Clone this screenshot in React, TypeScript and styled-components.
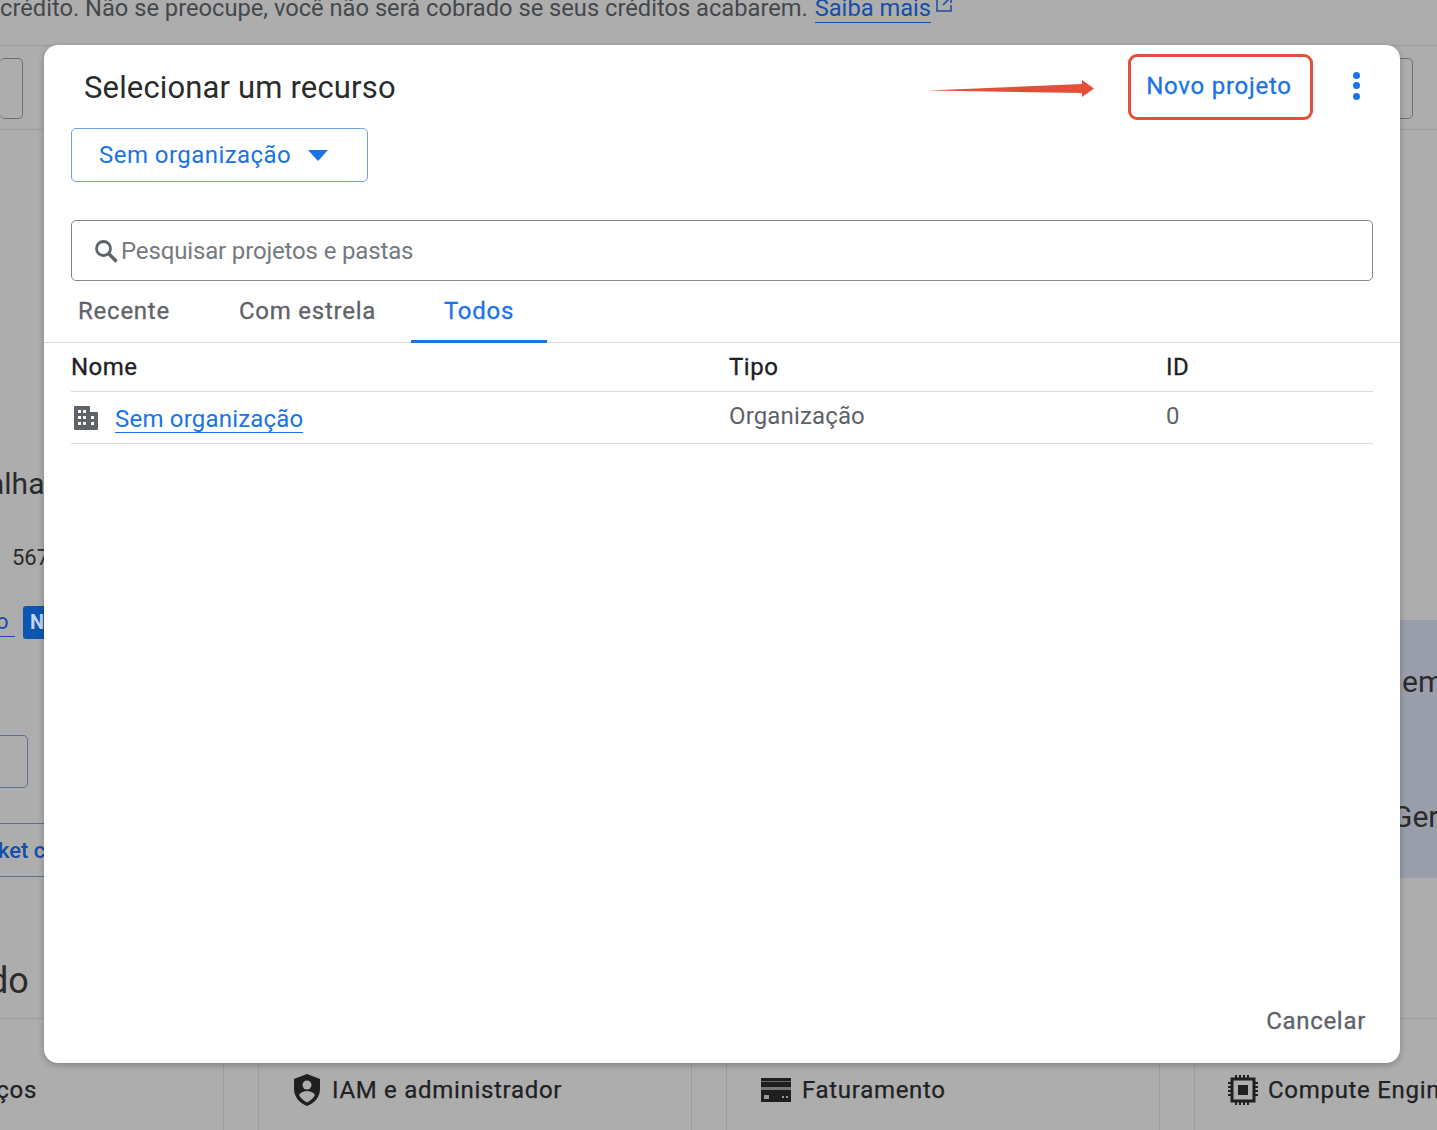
import styled, { createGlobalStyle } from "styled-components";

const GlobalStyle = createGlobalStyle`
  html, body {
    margin: 0;
    padding: 0;
    background: #adadad;
    font-family: Roboto, "Liberation Sans", sans-serif;
  }
  * {
    box-sizing: border-box;
  }
`;

const Page = styled.div`
  position: relative;
  width: 1437px;
  height: 1130px;
  overflow: hidden;
  background: #adadad;
  color: #1f1f1f;
`;

// ---- page behind the dialog ----

const Notice = styled.div`
  height: 54px;
  margin-top: -8px;
  font-size: 23.7px;
  line-height: 32px;
  white-space: nowrap;
  color: #45484b;
  border-bottom: 1px solid #9c9c9c;

  a {
    color: #174ea6;
    border-bottom: 1px solid #174ea6;
    margin-left: 1px;
  }

  svg {
    margin-left: 4px;
    vertical-align: 3px;
  }
`;

const Toolbar = styled.div`
  display: flex;
  justify-content: space-between;
  height: 84px;
  padding: 12px 24px 0 0;
  border-bottom: 1px solid #9c9c9c;
`;

const GhostButton = styled.div<{ $side: "left" | "right" }>`
  width: ${(p) => (p.$side === "left" ? "23px" : "30px")};
  height: 61px;
  border: 1px solid #6f6f6f;
  border-radius: 5px;
  ${(p) => (p.$side === "left" ? "border-left: 0;" : "")}
`;

const Middle = styled.div`
  display: flex;
  justify-content: space-between;
  height: 888px;
`;

const LeftFragments = styled.div`
  display: flex;
  flex-direction: column;
  width: 44px;
  overflow: hidden;
  padding-top: 334px;
  white-space: nowrap;
`;

const CutHeading = styled.div`
  margin-left: -12px;
  font-size: 30px;
  line-height: 40px;
  color: #2b2b2b;
`;

const CutNumber = styled.div`
  margin: 41px 0 0 12px;
  font-size: 22px;
  line-height: 26px;
  color: #2b2b2b;
`;

const CutLinkRow = styled.div`
  display: flex;
  align-items: center;
  gap: 8px;
  height: 34px;
  margin-top: 34px;
`;

const CutLink = styled.span`
  flex: none;
  width: 15px;
  border-bottom: 1px solid #174ea6;
  font-size: 22px;
  line-height: 28px;
  color: #174ea6;
  overflow: hidden;
  text-indent: -4px;
`;

const Badge = styled.span`
  flex: none;
  width: 21px;
  height: 33px;
  padding-left: 7px;
  border-radius: 3px 0 0 3px;
  background: #0b57b0;
  color: #c6d4ea;
  font-size: 20px;
  font-weight: 700;
  line-height: 33px;
`;

const CutBox = styled.div`
  width: 28px;
  height: 53px;
  margin-top: 96px;
  border: 1px solid #5c7099;
  border-left: 0;
  border-radius: 0 5px 5px 0;
`;

const CutBanner = styled.div`
  height: 54px;
  margin-top: 35px;
  border-top: 1px solid #5c7099;
  border-bottom: 1px solid #5c7099;
  font-size: 22px;
  font-weight: 500;
  line-height: 54px;
  color: #174ea6;
  text-indent: -2px;
`;

const CutTitle = styled.div`
  margin: 82px 0 0 0;
  font-size: 36px;
  line-height: 44px;
  color: #2b2b2b;
  text-indent: -12px;
`;

const RightPanel = styled.div`
  display: flex;
  flex-direction: column;
  align-self: flex-start;
  width: 37px;
  height: 258px;
  margin-top: 490px;
  padding: 42px 0 0 2px;
  overflow: hidden;
  background: #9a9eaa;
  white-space: nowrap;
  font-size: 30px;
  line-height: 40px;
  color: #2b2b2b;

  span + span {
    margin: 95px 0 0 -10px;
  }
`;

const ShortcutRow = styled.div`
  display: flex;
  gap: 34px;
  height: 112px;
  margin-left: -210px;
  border-top: 1px solid #9c9c9c;
`;

const Shortcut = styled.div`
  display: flex;
  flex: 0 0 434px;
  align-items: center;
  gap: 10px;
  height: 100%;
  padding: 30px 0 0 33px;
  border-left: 1px solid #9c9c9c;
  border-right: 1px solid #9c9c9c;
  font-size: 24px;
  letter-spacing: 0.7px;
  -webkit-text-stroke: 0.25px currentColor;
  white-space: nowrap;
  color: #202124;
`;

const ShortcutText = styled.span<{ $end?: boolean }>`
  ${(p) => (p.$end ? "margin-left: auto; margin-right: 186px;" : "")}
`;

// ---- dialog ----

const Dialog = styled.section`
  position: absolute;
  top: 45px;
  left: 44px;
  display: flex;
  flex-direction: column;
  width: 1356px;
  height: 1018px;
  border-radius: 14px;
  background: #fff;
  box-shadow: 0 2px 6px rgba(0, 0, 0, 0.25);
`;

const Header = styled.header`
  display: flex;
  align-items: flex-start;
  justify-content: space-between;
  height: 83px;
  padding: 9px 0 0 40px;
`;

const Title = styled.h2`
  margin: 16px 0 0;
  font-size: 31px;
  font-weight: 400;
  letter-spacing: 0.15px;
  line-height: 36px;
  color: #2a2b2d;
`;

const HeaderActions = styled.div`
  display: flex;
  align-items: center;
  gap: 40px;
  padding-right: 40px;
`;

const NewProject = styled.button`
  width: 185px;
  height: 66px;
  padding: 0 3px 2px 0;
  border: 3px solid #e34f38;
  border-radius: 9px;
  background: #fff;
  color: #1a73e8;
  font: 400 24px Roboto, sans-serif;
  letter-spacing: 0.75px;
  -webkit-text-stroke: 0.3px currentColor;
`;

const Dots = styled.span`
  display: flex;
  flex-direction: column;
  gap: 3.5px;
  margin-bottom: 3px;

  i {
    width: 7px;
    height: 7px;
    border-radius: 50%;
    background: #1a73e8;
  }
`;

const Arrow = styled.svg`
  position: absolute;
  top: 34px;
  left: 882px;
`;

const OrgSelect = styled.button`
  display: flex;
  align-items: center;
  gap: 17px;
  width: 297px;
  height: 54px;
  margin-left: 27px;
  padding: 0 0 0 27px;
  border: 1px solid #6ea0e8;
  border-radius: 5px;
  background: #fff;
  color: #1a73e8;
  font: 400 24px Roboto, sans-serif;
  letter-spacing: 0.45px;
`;

const Caret = styled.span`
  width: 0;
  height: 0;
  border-left: 10px solid transparent;
  border-right: 10px solid transparent;
  border-top: 11px solid #1a73e8;
`;

const SearchBox = styled.div`
  display: flex;
  align-items: center;
  gap: 3px;
  height: 61px;
  margin: 38px 27px 0;
  padding-left: 22px;
  border: 1px solid #80868b;
  border-radius: 5px;
  font-size: 24px;
`;

const Placeholder = styled.span`
  color: #757a7f;
  letter-spacing: -0.15px;
`;

const Tabs = styled.nav`
  display: flex;
  height: 62px;
  border-bottom: 1px solid #dadce0;
`;

const Tab = styled.div<{ $active?: boolean; $width: number }>`
  display: flex;
  align-items: center;
  justify-content: center;
  width: ${(p) => p.$width}px;
  height: 62px;
  font-size: 24px;
  letter-spacing: 0.75px;
  -webkit-text-stroke: 0.3px currentColor;
  color: ${(p) => (p.$active ? "#1a73e8" : "#5f6368")};
  border-bottom: 3px solid ${(p) => (p.$active ? "#1a73e8" : "transparent")};
`;

const Table = styled.div`
  margin: 0 27px;
`;

const Row = styled.div<{ $height: number }>`
  display: grid;
  grid-template-columns: 658px 437px 1fr;
  align-items: center;
  height: ${(p) => p.$height}px;
  border-bottom: 1px solid #dadce0;
  font-size: 24px;
`;

const HeadCell = styled.div`
  margin-top: -1px;
  letter-spacing: 0.5px;
  -webkit-text-stroke: 0.3px currentColor;
  color: #202124;
`;

const NameCell = styled.div`
  display: flex;
  align-items: center;
  gap: 17px;
  padding-left: 3px;
`;

const RowLink = styled.a`
  margin-top: 3px;
  color: #1a73e8;
  border-bottom: 1px solid #1a73e8;
  letter-spacing: 0.2px;
  line-height: 26px;
`;

const Cell = styled.div`
  color: #5f6368;
  margin-top: -3px;
  letter-spacing: 0.15px;
`;

const Footer = styled.footer`
  display: flex;
  justify-content: flex-end;
  margin-top: auto;
  padding: 0 34px 28px 0;
`;

const Cancel = styled.button`
  padding: 0;
  border: 0;
  background: none;
  color: #5f6368;
  font: 400 24px Roboto, sans-serif;
  letter-spacing: 0.7px;
  -webkit-text-stroke: 0.3px currentColor;
`;

const App = () => {
  return (
    <Page>
      <GlobalStyle />
      <Notice>
        crédito. Não se preocupe, você não será cobrado se seus créditos acabarem.{" "}
        <a>Saiba mais</a>
        <svg width="18" height="18" viewBox="0 0 18 18" fill="none" stroke="#174ea6" strokeWidth="1.5">
          <path d="M8 2H2v14h14v-6M10 2h6v6M16 2L8 10" />
        </svg>
      </Notice>
      <Toolbar>
        <GhostButton $side="left" />
        <GhostButton $side="right" />
      </Toolbar>
      <Middle>
        <LeftFragments>
          <CutHeading>alha</CutHeading>
          <CutNumber>567</CutNumber>
          <CutLinkRow>
            <CutLink>o</CutLink>
            <Badge>N</Badge>
          </CutLinkRow>
          <CutBox />
          <CutBanner>ket c</CutBanner>
          <CutTitle>do</CutTitle>
        </LeftFragments>
        <RightPanel>
          <span>em</span>
          <span>Ger</span>
        </RightPanel>
      </Middle>
      <ShortcutRow>
        <Shortcut>
          <ShortcutText $end>ços</ShortcutText>
        </Shortcut>
        <Shortcut>
          <svg width="30" height="34" viewBox="0 0 30 34">
            <path d="M15 1l13 5v10c0 8-5.500 14-13 17C7.500 30 2 24 2 16V6z" fill="#1f1f1f" />
            <circle cx="15" cy="12" r="4.500" fill="#adadad" />
            <path d="M7 22c2-3 5-4 8-4s6 1 8 4c-1.500 3-4.500 6-8 7.500C11.500 28 8.500 25 7 22z" fill="#adadad" />
          </svg>
          <span>IAM e administrador</span>
        </Shortcut>
        <Shortcut>
          <svg width="32" height="26" viewBox="0 0 32 26">
            <path d="M1 1h30v24H1z" fill="#1f1f1f" />
            <path d="M1 4h30v1H1z" fill="#6a6a6a" />
            <path d="M1 10h30v3H1z" fill="#777" />
            <path d="M4 18h5v4H4zM22 19h2v2h-2zM26 19h2v2h-2z" fill="#9a9a9a" />
          </svg>
          <span>Faturamento</span>
        </Shortcut>
        <Shortcut>
          <svg width="30" height="32" viewBox="0 0 30 32" fill="none">
            <rect x="4" y="5" width="22" height="22" stroke="#1f1f1f" strokeWidth="3" />
            <rect x="10" y="11" width="10" height="10" fill="#1f1f1f" />
            <path d="M0 9h4M0 13h4M0 17h4M0 21h4M26 9h4M26 13h4M26 17h4M26 21h4M8 1v4M12 1v4M16 1v4M20 1v4M8 27v4M12 27v4M16 27v4M20 27v4" stroke="#1f1f1f" strokeWidth="2" />
          </svg>
          <span>Compute Engine</span>
        </Shortcut>
      </ShortcutRow>

      <Dialog>
        <Header>
          <Title>Selecionar um recurso</Title>
          <HeaderActions>
            <NewProject>Novo projeto</NewProject>
            <Dots>
              <i />
              <i />
              <i />
            </Dots>
          </HeaderActions>
        </Header>
        <Arrow width="170" height="20" viewBox="0 0 170 20">
          <path d="M2 11.500L156 5V1l12 8.500L156 18v-4z" fill="#e34f38" />
        </Arrow>
        <OrgSelect>
          Sem organização
          <Caret />
        </OrgSelect>
        <SearchBox>
          <svg width="24" height="24" viewBox="0 0 24 24" fill="none" stroke="#5f6368">
            <circle cx="9.500" cy="9.500" r="7" strokeWidth="2.800" />
            <path d="M14.500 14.500L22.500 22.500" strokeWidth="3.400" />
          </svg>
          <Placeholder>Pesquisar projetos e pastas</Placeholder>
        </SearchBox>
        <Tabs>
          <Tab $width={160}>Recente</Tab>
          <Tab $width={207}>Com estrela</Tab>
          <Tab $width={136} $active>
            Todos
          </Tab>
        </Tabs>
        <Table>
          <Row $height={49}>
            <HeadCell>Nome</HeadCell>
            <HeadCell>Tipo</HeadCell>
            <HeadCell>ID</HeadCell>
          </Row>
          <Row $height={52}>
            <NameCell>
              <svg width="24" height="24" viewBox="0 0 24 24">
                <path
                  fillRule="evenodd"
                  fill="#5f6368"
                  d="M1 0h14a1 1 0 0 1 1 1v5h7a1 1 0 0 1 1 1v16a1 1 0 0 1-1 1H1a1 1 0 0 1-1-1V1a1 1 0 0 1 1-1zM4 4v3h3V4zM9 4v3h3V4zM4 10v3h3v-3zM9 10v3h3v-3zM4 16v3h3v-3zM9 16v3h3v-3zM17 10v3h3v-3zM17 16v3h3v-3z"
                />
              </svg>
              <RowLink>Sem organização</RowLink>
            </NameCell>
            <Cell>Organização</Cell>
            <Cell>0</Cell>
          </Row>
        </Table>
        <Footer>
          <Cancel>Cancelar</Cancel>
        </Footer>
      </Dialog>
    </Page>
  );
};

export default App;
